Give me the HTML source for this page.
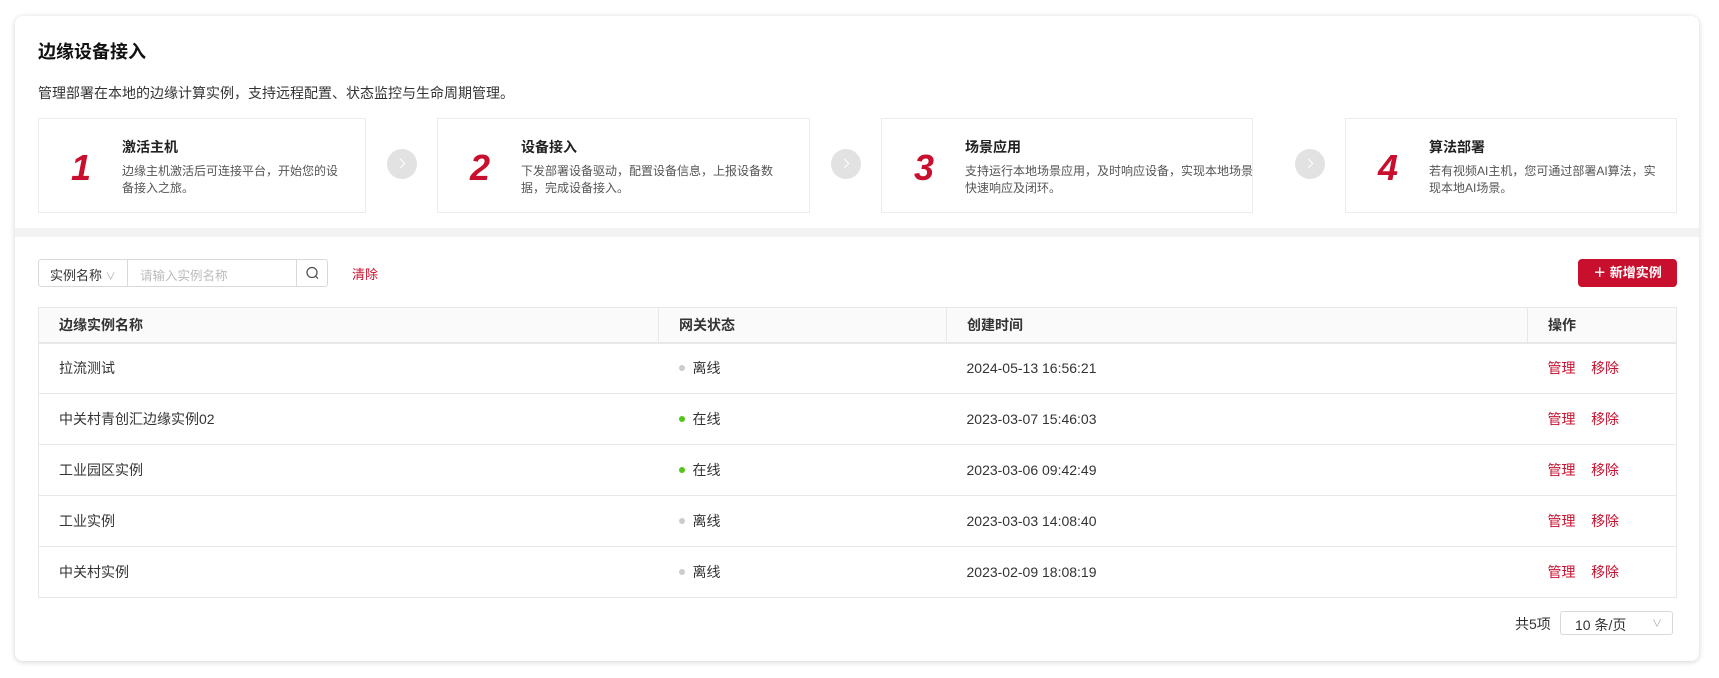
<!DOCTYPE html>
<html><head><meta charset="utf-8">
<style>
*{box-sizing:border-box;margin:0;padding:0}
body{width:1719px;height:678px;background:#fff;font-family:"Liberation Sans","Noto Sans CJK SC",sans-serif;color:#333;position:relative;overflow:hidden}
.wrap{position:absolute;left:15px;top:16px;width:1684px;height:645px;background:#f2f2f2;border-radius:8px;box-shadow:0 1px 6px rgba(0,0,0,.18)}
.p{position:absolute;background:#fff;left:0;width:1684px}
.abs{position:absolute}
.card{position:absolute;top:102px;height:95px;border:1px solid #ececec;background:#fff}
.num{position:absolute;left:32px;top:28px;font-size:36px;font-style:italic;font-weight:bold;color:#c8102e;font-family:"Liberation Sans",sans-serif}
.ct{position:absolute;left:83px;top:18px;font-size:14px;font-weight:bold;color:#222}
.cd{position:absolute;left:83px;top:44px;font-size:12px;line-height:17px;color:#555}
.arr{position:absolute;top:133px;width:30px;height:30px;border-radius:50%;background:#e2e2e2}
.arr:after{content:"";position:absolute;left:10px;top:11px;width:6px;height:6px;border-right:1.5px solid #fff;border-top:1.5px solid #fff;transform:rotate(45deg)}
table{position:absolute;left:23px;top:70px;width:1639px;border-collapse:collapse;font-size:14px}
th{height:35px;background:#fafafa;text-align:left;font-weight:bold;color:#333;padding-left:20px;border-bottom:2px solid #e8e8e8;border-top:1px solid #e8e8e8}
th+th{border-left:1px solid #e8e8e8}
td{height:51px;padding-left:20px;border-bottom:1px solid #e8e8e8;color:#333}
tr>*:first-child{border-left:1px solid #e8e8e8}
tr>*:last-child{border-right:1px solid #e8e8e8}
.dot{display:inline-block;width:6px;height:6px;border-radius:50%;margin-right:8px;vertical-align:2px}
.off{background:#ccc}.on{background:#52c41a}
.r{color:#c8102e}
</style></head><body>
<div class="wrap">
 <div class="p" style="top:0;height:212px;border-radius:8px 8px 0 0">
  <div class="abs" style="left:23px;top:22px;font-size:18px;font-weight:bold;color:#111">边缘设备接入</div>
  <div class="abs" style="left:23px;top:67px;font-size:14px;color:#333">管理部署在本地的边缘计算实例，支持远程配置、状态监控与生命周期管理。</div>
  <div class="card" style="left:23px;width:328px"><div class="num">1</div><div class="ct">激活主机</div><div class="cd" style="width:220px">边缘主机激活后可连接平台，开始您的设备接入之旅。</div></div>
  <div class="arr" style="left:372px"></div>
  <div class="card" style="left:422px;width:373px"><div class="num">2</div><div class="ct">设备接入</div><div class="cd" style="width:256px">下发部署设备驱动，配置设备信息，上报设备数据，完成设备接入。</div></div>
  <div class="arr" style="left:816px"></div>
  <div class="card" style="left:866px;width:372px"><div class="num">3</div><div class="ct">场景应用</div><div class="cd" style="width:290px">支持运行本地场景应用，及时响应设备，实现本地场景快速响应及闭环。</div></div>
  <div class="arr" style="left:1280px"></div>
  <div class="card" style="left:1330px;width:332px"><div class="num">4</div><div class="ct">算法部署</div><div class="cd" style="width:228px">若有视频AI主机，您可通过部署AI算法，实现本地AI场景。</div></div>
 </div>
 <div class="p" style="top:221px;height:424px;border-radius:0 0 8px 8px">
  <div class="abs" style="left:23px;top:22px;width:290px;height:28px;border:1px solid #d9d9d9;border-radius:3px;font-size:13px">
   <div class="abs" style="left:0;top:0;width:89px;height:26px;border-right:1px solid #d9d9d9;padding:5px 0 0 11px;color:#333">实例名称 <span style="color:#aaa;font-size:10px">∨</span></div>
   <div class="abs" style="left:101px;top:5px;color:#bbb;font-size:12.5px">请输入实例名称</div>
   <div class="abs" style="left:257px;top:0;width:31px;height:26px;border-left:1px solid #d9d9d9">
    <svg width="31" height="26" viewBox="0 0 31 26"><circle cx="15" cy="12.5" r="5" fill="none" stroke="#555" stroke-width="1.3"/><path d="M18.6 16.2l2.4 2.4" stroke="#555" stroke-width="1.3"/></svg>
   </div>
  </div>
  <div class="abs r" style="left:337px;top:27px;font-size:13px">清除</div>
  <div class="abs" style="left:1563px;top:22px;width:99px;height:28px;background:#c8102e;border-radius:4px;color:#fff;font-size:13px;font-weight:bold;text-align:center;line-height:28px">＋ 新增实例</div>
  <table>
   <tr><th style="width:620px">边缘实例名称</th><th style="width:288px">网关状态</th><th style="width:581px">创建时间</th><th>操作</th></tr>
   <tr><td>拉流测试</td><td><span class="dot off"></span>离线</td><td>2024-05-13 16:56:21</td><td><span class="r">管理</span>&nbsp;&nbsp;&nbsp;&nbsp;<span class="r">移除</span></td></tr>
   <tr><td>中关村青创汇边缘实例02</td><td><span class="dot on"></span>在线</td><td>2023-03-07 15:46:03</td><td><span class="r">管理</span>&nbsp;&nbsp;&nbsp;&nbsp;<span class="r">移除</span></td></tr>
   <tr><td>工业园区实例</td><td><span class="dot on"></span>在线</td><td>2023-03-06 09:42:49</td><td><span class="r">管理</span>&nbsp;&nbsp;&nbsp;&nbsp;<span class="r">移除</span></td></tr>
   <tr><td>工业实例</td><td><span class="dot off"></span>离线</td><td>2023-03-03 14:08:40</td><td><span class="r">管理</span>&nbsp;&nbsp;&nbsp;&nbsp;<span class="r">移除</span></td></tr>
   <tr><td>中关村实例</td><td><span class="dot off"></span>离线</td><td>2023-02-09 18:08:19</td><td><span class="r">管理</span>&nbsp;&nbsp;&nbsp;&nbsp;<span class="r">移除</span></td></tr>
  </table>
  <div class="abs" style="left:1500px;top:377px;font-size:14px">共5项</div>
  <div class="abs" style="left:1545px;top:374px;width:113px;height:24px;border:1px solid #d9d9d9;border-radius:3px;font-size:14px;padding:3px 0 0 14px">10 条/页<span style="position:absolute;right:10px;top:3px;color:#aaa;font-size:10px">∨</span></div>
 </div>
</div>
</body></html>
